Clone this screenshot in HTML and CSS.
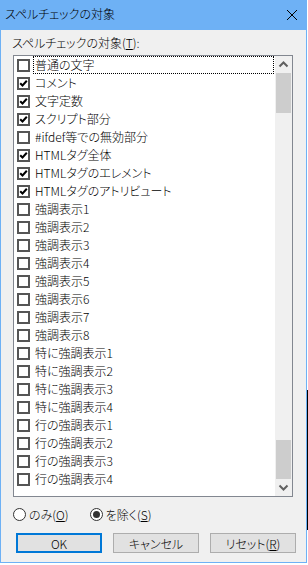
FILE: index.html
```
<!DOCTYPE html>
<html lang="ja">
<head>
  <meta charset="UTF-8" />
  <title>スペルチェックの対象</title>
  <link rel="stylesheet" href="styles.css">
</head>
<body>

  <div class="window">
    <div class="titlebar">
      <span class="title">スペルチェックの対象</span>
      <svg class="close" width="12" height="12" viewBox="0 0 12 12">
        <path d="M1 1 L11 11 M11 1 L1 11" stroke="#000" stroke-width="1" fill="none" />
      </svg>
    </div>

    <div class="content">
      <div class="label">スペルチェックの対象(<u>T</u>):</div>

      <div class="listbox">
        <ul class="items" id="items"></ul>
        <div class="scrollbar">
          <div class="sb-arrow">
            <svg width="17" height="17" viewBox="0 0 17 17"><polyline points="4.5,10.5 8.5,6.5 12.5,10.5" stroke="#606060" stroke-width="2" fill="none" /></svg>
          </div>
          <div class="sb-thumb top"></div>
          <div class="sb-track"></div>
          <div class="sb-thumb bottom"></div>
          <div class="sb-arrow">
            <svg width="17" height="17" viewBox="0 0 17 17"><polyline points="4.5,6.5 8.5,10.5 12.5,6.5" stroke="#606060" stroke-width="2" fill="none" /></svg>
          </div>
        </div>
      </div>

      <div class="radios">
        <label class="radio"><span class="dot"></span>のみ(<u>O</u>)</label>
        <label class="radio checked"><span class="dot"></span>を除く(<u>S</u>)</label>
      </div>

      <div class="buttons">
        <button class="btn default">OK</button>
        <button class="btn">キャンセル</button>
        <button class="btn">リセット(<u>R</u>)</button>
      </div>
    </div>
  </div>

  <script>
    const targets = [
      { name: "普通の文字", on: false },
      { name: "コメント", on: true },
      { name: "文字定数", on: true },
      { name: "スクリプト部分", on: true },
      { name: "#ifdef等での無効部分", on: false },
      { name: "HTMLタグ全体", on: true },
      { name: "HTMLタグのエレメント", on: true },
      { name: "HTMLタグのアトリビュート", on: true },
      { name: "強調表示1", on: false },
      { name: "強調表示2", on: false },
      { name: "強調表示3", on: false },
      { name: "強調表示4", on: false },
      { name: "強調表示5", on: false },
      { name: "強調表示6", on: false },
      { name: "強調表示7", on: false },
      { name: "強調表示8", on: false },
      { name: "特に強調表示1", on: false },
      { name: "特に強調表示2", on: false },
      { name: "特に強調表示3", on: false },
      { name: "特に強調表示4", on: false },
      { name: "行の強調表示1", on: false },
      { name: "行の強調表示2", on: false },
      { name: "行の強調表示3", on: false },
      { name: "行の強調表示4", on: false }
    ];

    const checkSvg = '<svg width="9" height="9" viewBox="0 0 9 9"><polyline points="1.2,4.2 3.5,6.5 7.8,1.8" stroke="#000" stroke-width="2" fill="none" /></svg>';

    const list = document.getElementById('items');
    targets.forEach((t, i) => {
      const li = document.createElement('li');
      li.className = 'item';
      li.innerHTML = `
        <span class="cb">${t.on ? checkSvg : ''}</span>
        <span class="text${i === 0 ? ' focus' : ''}">${t.name}</span>
      `;
      list.appendChild(li);
    });
  </script>

</body>
</html>
```

FILE: styles.css
```
html {
  background: linear-gradient(to bottom, #fff 390px, #000 390px, #000 530px, #fff 530px) right top / 1px 100% no-repeat, #fff;
}

body {
  margin: 0;
  font-family: "Noto Sans CJK JP", "Noto Sans", sans-serif;
  font-size: 12px;
  font-weight: 300;
  font-feature-settings: "palt";
  color: #000;
}

.window {
  width: 307px;
  height: 563px;
  box-sizing: border-box;
  border: 1px solid #6eb1f5;
  border-top: none;
  background-color: #f0f0f0;
  display: flex;
  flex-direction: column;
}

.titlebar {
  height: 30px;
  background-color: #6eb1f5;
  display: flex;
  align-items: center;
  justify-content: space-between;
  padding: 0 8px 2px 4px;
  box-sizing: border-box;
}

.title {
  line-height: 14px;
}

.close {
  display: block;
  margin-top: 1px;
}

.content {
  padding: 6px 0 0 0;
}

.label {
  line-height: 14px;
  margin-left: 11px;
  height: 19px;
}

/* リストボックス */
.listbox {
  margin-left: 12px;
  width: 280px;
  height: 442px;
  box-sizing: border-box;
  border: 1px solid #828790;
  background-color: #fff;
  display: flex;
}

.items {
  list-style: none;
  margin: 0;
  padding: 0;
  flex: 1;
}

.item {
  height: 18px;
  display: flex;
  align-items: center;
  padding-left: 3px;
}

.cb {
  width: 13px;
  height: 13px;
  box-sizing: border-box;
  border: 2px solid #555;
  background-color: #fff;
  display: flex;
  align-items: center;
  justify-content: center;
  flex-shrink: 0;
}

.cb svg {
  display: block;
}

.text {
  margin-left: 3px;
  padding: 0 1px;
  height: 16px;
  line-height: 16px;
  border: 1px dotted transparent;
  white-space: nowrap;
}

.text.focus {
  flex: 1;
  margin-right: 1px;
  border-color: #000;
}

/* スクロールバー */
.scrollbar {
  width: 17px;
  background-color: #f0f0f0;
  display: flex;
  flex-direction: column;
}

.sb-arrow {
  height: 17px;
}

.sb-arrow svg {
  display: block;
}

.sb-thumb {
  background-color: #cdcdcd;
  margin: 0 1px;
}

.sb-thumb.top {
  height: 40px;
}

.sb-thumb.bottom {
  height: 39px;
}

.sb-track {
  flex: 1;
}

/* ラジオボタン */
.radios {
  display: flex;
  margin: 11px 0 0 12px;
  height: 13px;
  align-items: center;
}

.radio {
  display: flex;
  align-items: center;
  line-height: 14px;
}

.radio + .radio {
  margin-left: 21px;
}

.dot {
  width: 13px;
  height: 13px;
  box-sizing: border-box;
  border: 1px solid #333;
  border-radius: 50%;
  background-color: #fff;
  margin-right: 3px;
  display: flex;
  align-items: center;
  justify-content: center;
}

.radio.checked .dot::after {
  content: "";
  width: 7px;
  height: 7px;
  border-radius: 50%;
  background-color: #333;
}

/* ボタン */
.buttons {
  display: flex;
  gap: 11px;
  margin: 12px 0 0 15px;
}

.btn {
  width: 86px;
  height: 20px;
  box-sizing: border-box;
  border: 1px solid #adadad;
  background-color: #e1e1e1;
  font-family: inherit;
  font-size: 12px;
  font-weight: 300;
  font-feature-settings: "palt";
  padding: 0;
  color: #000;
}

.btn.default {
  border: 2px solid #0078d7;
}
```
